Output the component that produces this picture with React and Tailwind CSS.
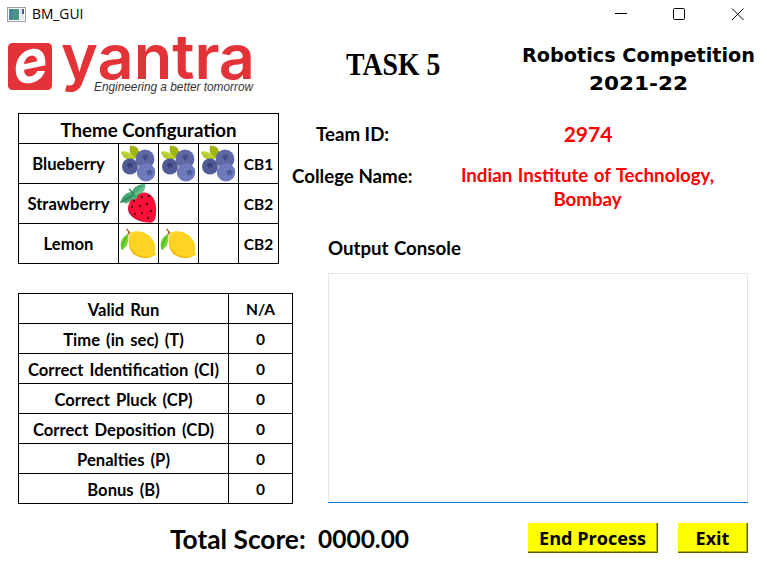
import React from "react";

function Blueberries() {
  return (
    <svg width="37" height="37" viewBox="0 0 37 37">
      <path d="M1 7C6 5 12 8 14 14C8 16 3 14 1 7Z" fill="#b5cc2e" />
      <path d="M10 1C17 0 20 5 19 11L14 14C11 11 9 7 10 1Z" fill="#a0b512" />
      <path d="M1 7C6 8 10 10 14 14L15 13C12 9 7 5 1 7Z" fill="#c2d838" />
      <circle cx="25" cy="14" r="9.4" fill="#5f69a5" />
      <circle cx="10" cy="21.5" r="8" fill="#505a94" />
      <circle cx="26" cy="27.3" r="9.2" fill="#6e7abb" />
      <path d="M23 8.500l2.500 1.500 2.500-1 -.5 2.900 1.400 2-2.600.2-2 1.800-.7-2.500-2.300-1.200 2-1Z" fill="#444e86" />
      <path d="M9 17l1.700 1.500 2.600-.3-1.200 2.100.9 2.300-2.500-.4-2 1.500-.2-2.400L6 19.900l2.300-.7Z" fill="#36427e" />
      <path d="M29.500 23.800l1.200 2 2.500.2-1.900 1.800.5 2.500-2.200-.9-2.300 1.100.2-2.700-1.700-1.700 2.500-.2Z" fill="#4d5894" />
    </svg>
  );
}

const seeds = [[14, 17], [22, 13], [29, 12], [12, 23], [20, 22], [27, 20], [15, 30], [22, 29], [31, 27], [28, 34]];

function Strawberry() {
  return (
    <svg width="37" height="39" viewBox="0 0 37 39">
      <path d="M9 20C11 12 20 7 27 9C34 11 37 20 36 29C36 36 33 40 28 38.5C20 37 6 31 9 20Z" fill="#ff1038" />
      <path d="M9 20C7 28 18 36 28 38.8C18 38 7 32 8 23Z" fill="#d50b31" />
      {seeds.map(([x, y]) => (
        <ellipse key={`${x}-${y}`} cx={x} cy={y} rx=".9" ry="1.2" fill="#26070d" />
      ))}
      <path d="M0 19C2 12 6 8 12 8C13 3 19 0 25 0C26 5 23 9 18 11C18 15 15 17 12 15C9 19 5 21 4 18Z" fill="#4bab76" />
      <path d="M0 19C4 14 9 11 16 10L4 18Z" fill="#2f8b5b" />
      <path d="M14 10C18 8 21 4 25 0C26 6 22 10 15 11Z" fill="#66c28d" />
      <path d="M9 5L14 10" stroke="#24794b" strokeWidth="1.2" />
    </svg>
  );
}

function Lemon() {
  return (
    <svg width="37" height="32" viewBox="0 0 37 32">
      <path d="M10 5C17 1 28 4 33 12C36 17 35 21 35 24C37 26 36 28 33 28C27 31 18 30 13 24C9 19 8 12 10 5Z" fill="#ffd324" />
      <path d="M10 6C8 13 10 20 14 24C19 29 27 30 33 28C28 32 17 30 12.5 25C8.500 20 7.500 13 10 6Z" fill="#edb90c" />
      <path d="M8 6C9 12 8 19 2 22C-1 16 1 9 8 6Z" fill="#7dd63a" />
      <path d="M8 6C6 13 4 17 2 22C0 19 1 14 8 6Z" fill="#5fbd25" />
      <path d="M6.500 1L10 5M9 3.500L8 7" stroke="#a7641e" strokeWidth="1.3" fill="none" />
    </svg>
  );
}

function Logo() {
  return (
    <svg width="248" height="54" viewBox="0 0 248 54" className="overflow-visible">
      <rect x="0" y="3" width="44" height="47" rx="4.500" fill="#e33338" />
      <text transform="translate(5.500 46) skewY(-12)" className="font-[Inter] font-bold" fontSize="60" textLength="34" lengthAdjust="spacingAndGlyphs" fill="#fff">e</text>
      <text x="53" y="39" className="font-[Inter] font-semibold" fontSize="62" textLength="194" lengthAdjust="spacingAndGlyphs" fill="#e33338">yantra</text>
      <text x="86" y="50.500" className="font-['Liberation_Sans'] font-normal italic" fontSize="12" textLength="159" lengthAdjust="spacingAndGlyphs" fill="#333">Engineering a better tomorrow</text>
    </svg>
  );
}

const themeRows = [
  { name: "Blueberry", count: 3, box: "CB1", Icon: Blueberries },
  { name: "Strawberry", count: 1, box: "CB2", Icon: Strawberry },
  { name: "Lemon", count: 2, box: "CB2", Icon: Lemon },
];

const results = [
  ["Valid Run", "N/A"],
  ["Time (in sec) (T)", "0"],
  ["Correct Identification (CI)", "0"],
  ["Correct Pluck (CP)", "0"],
  ["Correct Deposition (CD)", "0"],
  ["Penalties (P)", "0"],
  ["Bonus (B)", "0"],
];

const cell = "flex items-center justify-center overflow-hidden whitespace-nowrap bg-white";

function ThemeTable() {
  return (
    <div className="grid w-[261px] grid-cols-[99px_39px_39px_39px_39px] grid-rows-[29px_39px_39px_39px] gap-px bg-black p-px text-[16.6px]">
      <div className={`${cell} col-span-5 pt-[3px] text-[18.7px]`}>Theme Configuration</div>
      {themeRows.map(({ name, count, box, Icon }) => (
        <React.Fragment key={name}>
          <div className={`${cell} pt-[2px]`}>{name}</div>
          {[0, 1, 2].map((i) => (
            <div key={i} className={cell}>{i < count && <Icon />}</div>
          ))}
          <div className={`${cell} pt-[2px] text-[15.5px]`}>{box}</div>
        </React.Fragment>
      ))}
    </div>
  );
}

function ResultTable() {
  return (
    <div className="grid w-[275px] auto-rows-[29px] grid-cols-[209px_63px] gap-px bg-black p-px text-[16.6px] [word-spacing:2px]">
      {results.map(([label, value]) => (
        <React.Fragment key={label}>
          <div className={`${cell} pt-[3px]`}>{label}</div>
          <div className={`${cell} pt-[3px] text-[15.5px]`}>{value}</div>
        </React.Fragment>
      ))}
    </div>
  );
}

const button = "h-[30px] border-r border-b border-[#5f5f00] bg-[#ffff00] pt-px font-['Open_Sans'] text-[18.1px] leading-none font-bold shadow-[inset_-1px_-1px_0_#b0b000]";

export default function App() {
  return (
    <div className="flex h-[570px] w-[767px] flex-col overflow-hidden bg-white font-[Lato,sans-serif] font-bold text-black">
      <div className="flex h-7 items-center pl-[7px]">
        <svg width="19" height="15" viewBox="0 0 19 15">
          <rect x=".5" y=".5" width="18" height="14" fill="#fff" stroke="#9aa0a6" />
          <rect x="2" y="2" width="10" height="11" fill="#4b9680" />
          <rect x="2" y="2" width="4" height="11" fill="#4f79ae" opacity=".6" />
          <rect x="13" y="2" width="4" height="11" fill="#e4e8eb" />
          <rect x="15" y="2" width="2" height="5" fill="#3d6698" />
        </svg>
        <span className="ml-[6px] flex-1 pt-px font-['Open_Sans'] text-[13.8px] font-normal">BM_GUI</span>
        <svg width="160" height="28" viewBox="0 0 160 28" fill="none" stroke="#000" strokeWidth="1">
          <path d="M8 13.500h12" />
          <rect x="66.500" y="8.500" width="11" height="11" rx="1" />
          <path d="M125 8.500l11.500 11.500M136.500 8.500L125 20" />
        </svg>
      </div>
      <header className="flex h-[85px] items-start pl-2">
        <div className="w-[338px] pt-[12px]"><Logo /></div>
        <h1 className="w-[176px] origin-left scale-x-[0.91] pt-[20px] font-['Liberation_Serif'] text-[30.5px] leading-[34px] whitespace-nowrap">TASK 5</h1>
        <div className="pt-[14px]">
          <svg width="235" height="52" viewBox="0 0 235 52" className="font-['DejaVu_Sans'] font-bold">
            <text x="0" y="20" fontSize="19.500" textLength="233" lengthAdjust="spacingAndGlyphs">Robotics Competition</text>
            <text x="67" y="47.500" fontSize="19" textLength="99" lengthAdjust="spacingAndGlyphs">2021-22</text>
          </svg>
        </div>
      </header>
      <main className="flex h-[391px] pl-[18px]">
        <div className="flex w-[274px] flex-col justify-between">
          <ThemeTable />
          <ResultTable />
        </div>
        <div className="flex flex-1 flex-col pr-[19px]">
          <div className="flex h-[51px] items-start text-[18.7px]">
            <div className="w-[160px] pt-[7px] pl-6 whitespace-nowrap">Team ID:</div>
            <div className="flex-1 pt-[5px] pr-[24px] text-center text-[21px] text-[#ff0000]">2974</div>
          </div>
          <div className="flex h-[72px] items-start text-[18.7px] leading-6">
            <div className="w-[150px] whitespace-nowrap">College Name:</div>
            <div className="flex-1 pr-[15px] text-center text-[#ff0000]">
              <div className="-mt-px whitespace-nowrap [word-spacing:1px]">Indian Institute of Technology,</div>
              <div>Bombay</div>
            </div>
          </div>
          <div className="h-[37px] pl-9 text-[18.7px] leading-6 [word-spacing:0.8px]">Output Console</div>
          <div className="ml-9 h-[229px] border-x border-t border-[#e5e5e5]" />
          <div className="ml-9 h-px bg-[#0078d4]" />
        </div>
      </main>
      <footer className="flex flex-1 items-start pl-[170px]">
        <div className="w-[148px] pt-[18px] text-[26.3px] leading-[34px] whitespace-nowrap">Total Score:</div>
        <div className="w-[210px] pt-[18px] text-[24.5px] leading-[34px]">0000.00</div>
        <div className="flex gap-5 pt-[19px]">
          <button className={`${button} w-[130px]`}>End Process</button>
          <button className={`${button} w-[70px]`}>Exit</button>
        </div>
      </footer>
    </div>
  );
}
